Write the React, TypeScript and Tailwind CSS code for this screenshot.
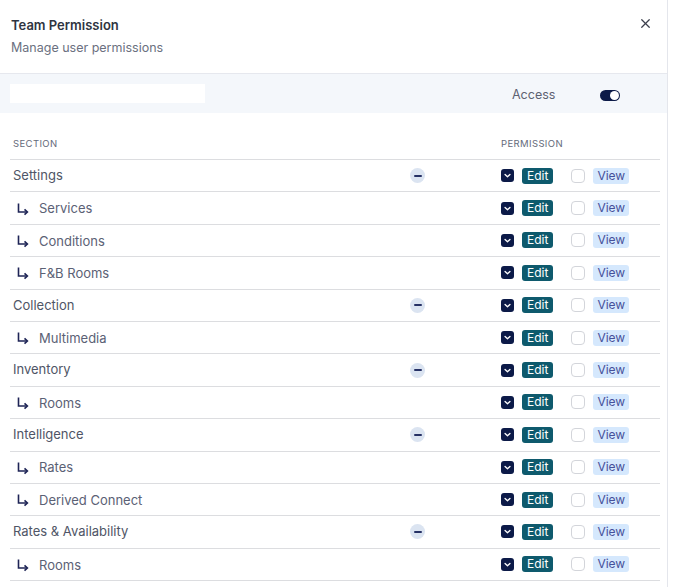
import { X } from "lucide-react";

type Row = { label: string; sub?: boolean };

const rows: Row[] = [
  { label: "Settings" },
  { label: "Services", sub: true },
  { label: "Conditions", sub: true },
  { label: "F&B Rooms", sub: true },
  { label: "Collection" },
  { label: "Multimedia", sub: true },
  { label: "Inventory" },
  { label: "Rooms", sub: true },
  { label: "Intelligence" },
  { label: "Rates", sub: true },
  { label: "Derived Connect", sub: true },
  { label: "Rates & Availability" },
  { label: "Rooms", sub: true },
];

function SubArrow() {
  return (
    <svg width="12" height="13" viewBox="0 0 12 13" className="shrink-0 text-[#1e2456]">
      <path d="M1.5 0.5 V9 H10" fill="none" stroke="currentColor" strokeWidth="1.6" />
      <path d="M7.5 6.3 L10.4 9 L7.5 11.7" fill="none" stroke="currentColor" strokeWidth="1.6" />
    </svg>
  );
}

function Checked() {
  return (
    <span className="flex h-[13px] w-[13px] items-center justify-center rounded-[3px] bg-[#0c1a48]">
      <svg width="9" height="9" viewBox="0 0 10 10">
        <path d="M2.3 3.8 L5 6.3 L7.7 3.8" fill="none" stroke="white" strokeWidth="1.5" strokeLinecap="round" strokeLinejoin="round" />
      </svg>
    </span>
  );
}

export default function App() {
  return (
    <div className="h-[587px] w-[683px] overflow-hidden bg-white font-['Inter',sans-serif]">
      <div className="h-full w-[668px] border-r border-[#e4e6ec]">
        <div className="relative h-[74px] border-b border-[#e6e8ee] px-[11px] pt-[16px]">
          <h1 className="text-[13px] font-semibold leading-[18px] text-[#2f3441]">Team Permission</h1>
          <p className="mt-[5px] text-[12.5px] leading-[18px] text-[#6b7080]">Manage user permissions</p>
          <X className="absolute right-[14px] top-[16px] text-[#3b3f4c]" size={15} strokeWidth={2} />
        </div>

        <div className="flex h-[39px] items-center bg-[#f4f7fb] pl-[10px]">
          <div className="h-[19px] w-[195px] bg-white" />
          <span className="ml-[307px] mt-[4px] text-[12.5px] text-[#5d6272]">Access</span>
          <span className="ml-[45px] mt-[4px] flex h-[11px] w-[20px] items-center justify-end rounded-full bg-[#0c1a48] pr-[1px]">
            <span className="h-[9px] w-[9px] rounded-full bg-white" />
          </span>
        </div>

        <div className="pl-[10px] pr-[7px] pt-[24px]">
          <div className="grid h-[23px] grid-cols-[400px_91px_1fr] border-b border-[#dcdde0] text-[9.5px] uppercase tracking-[0.04em] text-[#646a7a]">
            <span className="pl-[3px]">Section</span>
            <span />
            <span>Permission</span>
          </div>
          {rows.map((r, i) => (
            <div
              key={i}
              className="grid h-[32.4px] grid-cols-[400px_91px_1fr] items-center border-b border-[#dcdde0]"
            >
              {r.sub ? (
                <div className="flex items-center pl-[7px] pt-[2px] text-[13px] text-[#5b6175]">
                  <SubArrow />
                  <span className="ml-[10px]">{r.label}</span>
                </div>
              ) : (
                <div className="pl-[3px] text-[13px] text-[#4f5566]">{r.label}</div>
              )}
              <div>
                {!r.sub && (
                  <span className="flex h-[15px] w-[15px] items-center justify-center rounded-full bg-[#dbe4f1]">
                    <span className="h-[2px] w-[8px] rounded bg-[#253064]" />
                  </span>
                )}
              </div>
              <div className="flex items-center">
                <Checked />
                <span className="ml-[8px] rounded-[3px] bg-[#0e5a6d] px-[5px] text-[12px] leading-[16px] text-white">Edit</span>
                <span className="ml-[18px] h-[14px] w-[14px] rounded-[4px] border border-[#d3d5da] bg-white" />
                <span className="ml-[8px] rounded-[3px] bg-[#d5e8fd] px-[4px] text-[12px] leading-[16px] text-[#46509a]">View</span>
              </div>
            </div>
          ))}
        </div>
      </div>
    </div>
  );
}
